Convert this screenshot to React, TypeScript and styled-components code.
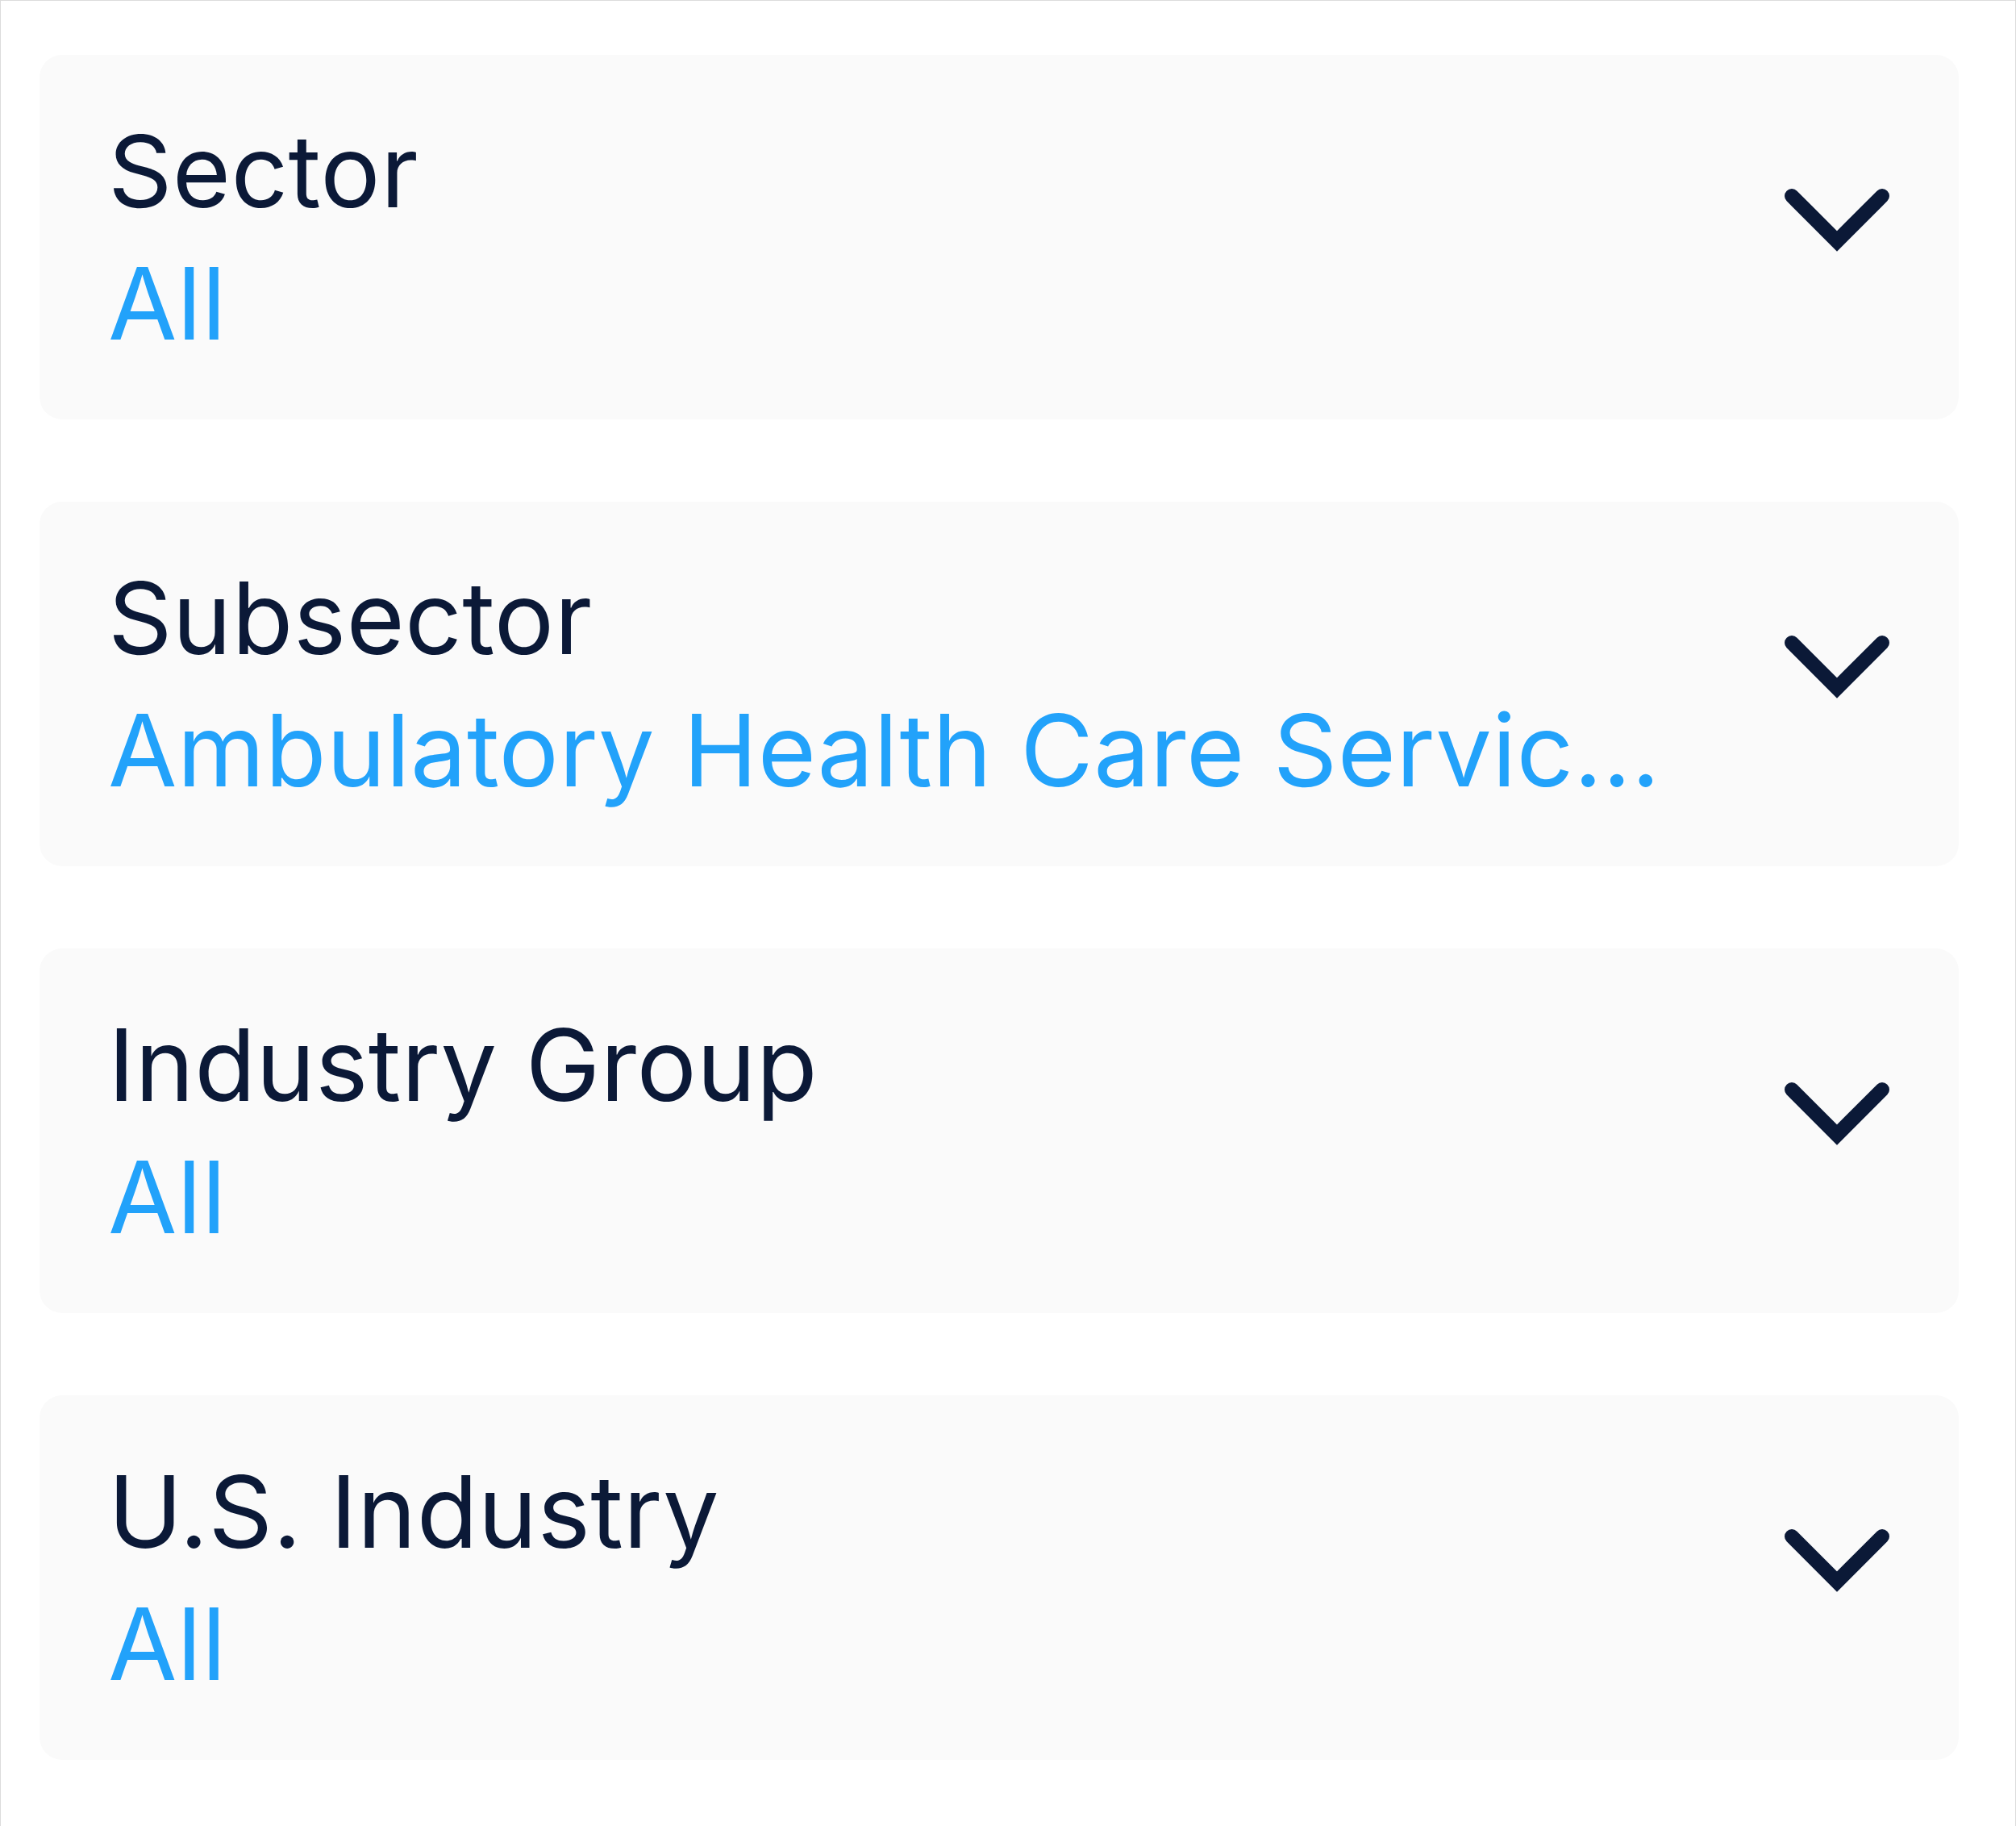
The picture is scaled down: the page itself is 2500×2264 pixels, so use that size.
import React from 'react'
import styled, { createGlobalStyle } from 'styled-components'

const color = {
  NAVY: '#0b1937',
  BLUE: '#22a2fa',
  CARD: '#fafafa',
  FRAME: '#dcdcdc',
}

type Filter = {
  label: string
  value: string
}

const filters: Filter[] = [
  { label: 'Sector', value: 'All' },
  { label: 'Subsector', value: 'Ambulatory Health Care Services' },
  { label: 'Industry Group', value: 'All' },
  { label: 'U.S. Industry', value: 'All' },
]

const GlobalStyle = createGlobalStyle`
  html, body {
    margin: 0;
    padding: 0;
    background: #ffffff;
  }
  * {
    box-sizing: border-box;
  }
`

const Chevron = () => (
  <ChevronIcon viewBox="0 0 130 80" aria-hidden="true">
    <polyline points="9,9 65,65 121,9" />
  </ChevronIcon>
)

export default function App() {
  return (
    <>
      <GlobalStyle />
      <Frame>
        <FilterList>
          {filters.map((f) => (
            <FilterCard key={f.label} type="button">
              <TextBlock>
                <Label>{f.label}</Label>
                <Value>{f.value}</Value>
              </TextBlock>
              <Chevron />
            </FilterCard>
          ))}
        </FilterList>
      </Frame>
    </>
  )
}

const Frame = styled.div`
  width: 2500px;
  min-height: 2264px;
  border: 1px solid ${color.FRAME};
  border-bottom: none;
  padding: 67px 70px 0 48px;
  background: #ffffff;
`

const FilterList = styled.div`
  display: flex;
  flex-direction: column;
  gap: 102px;
`

const FilterCard = styled.button`
  display: flex;
  align-items: center;
  justify-content: space-between;
  width: 100%;
  height: 452px;
  padding: 0 86px 0 85px;
  border: none;
  border-radius: 28px;
  background: ${color.CARD};
  text-align: left;
  cursor: pointer;
`

const TextBlock = styled.div`
  display: flex;
  flex-direction: column;
  min-width: 0;
  max-width: 1950px;
  font-family: Inter, 'Noto Sans', sans-serif;
  font-size: 124px;
  line-height: 164px;
  font-weight: 400;
  letter-spacing: 0.3px;
`

const Label = styled.span`
  color: ${color.NAVY};
  white-space: nowrap;
`

const Value = styled.span`
  color: ${color.BLUE};
  white-space: nowrap;
  overflow: hidden;
  text-overflow: ellipsis;
`

const ChevronIcon = styled.svg`
  flex-shrink: 0;
  width: 130px;
  height: 80px;
  margin-bottom: 40px;
  fill: none;
  stroke: ${color.NAVY};
  stroke-width: 18;
  stroke-linecap: round;
  stroke-linejoin: miter;
`
